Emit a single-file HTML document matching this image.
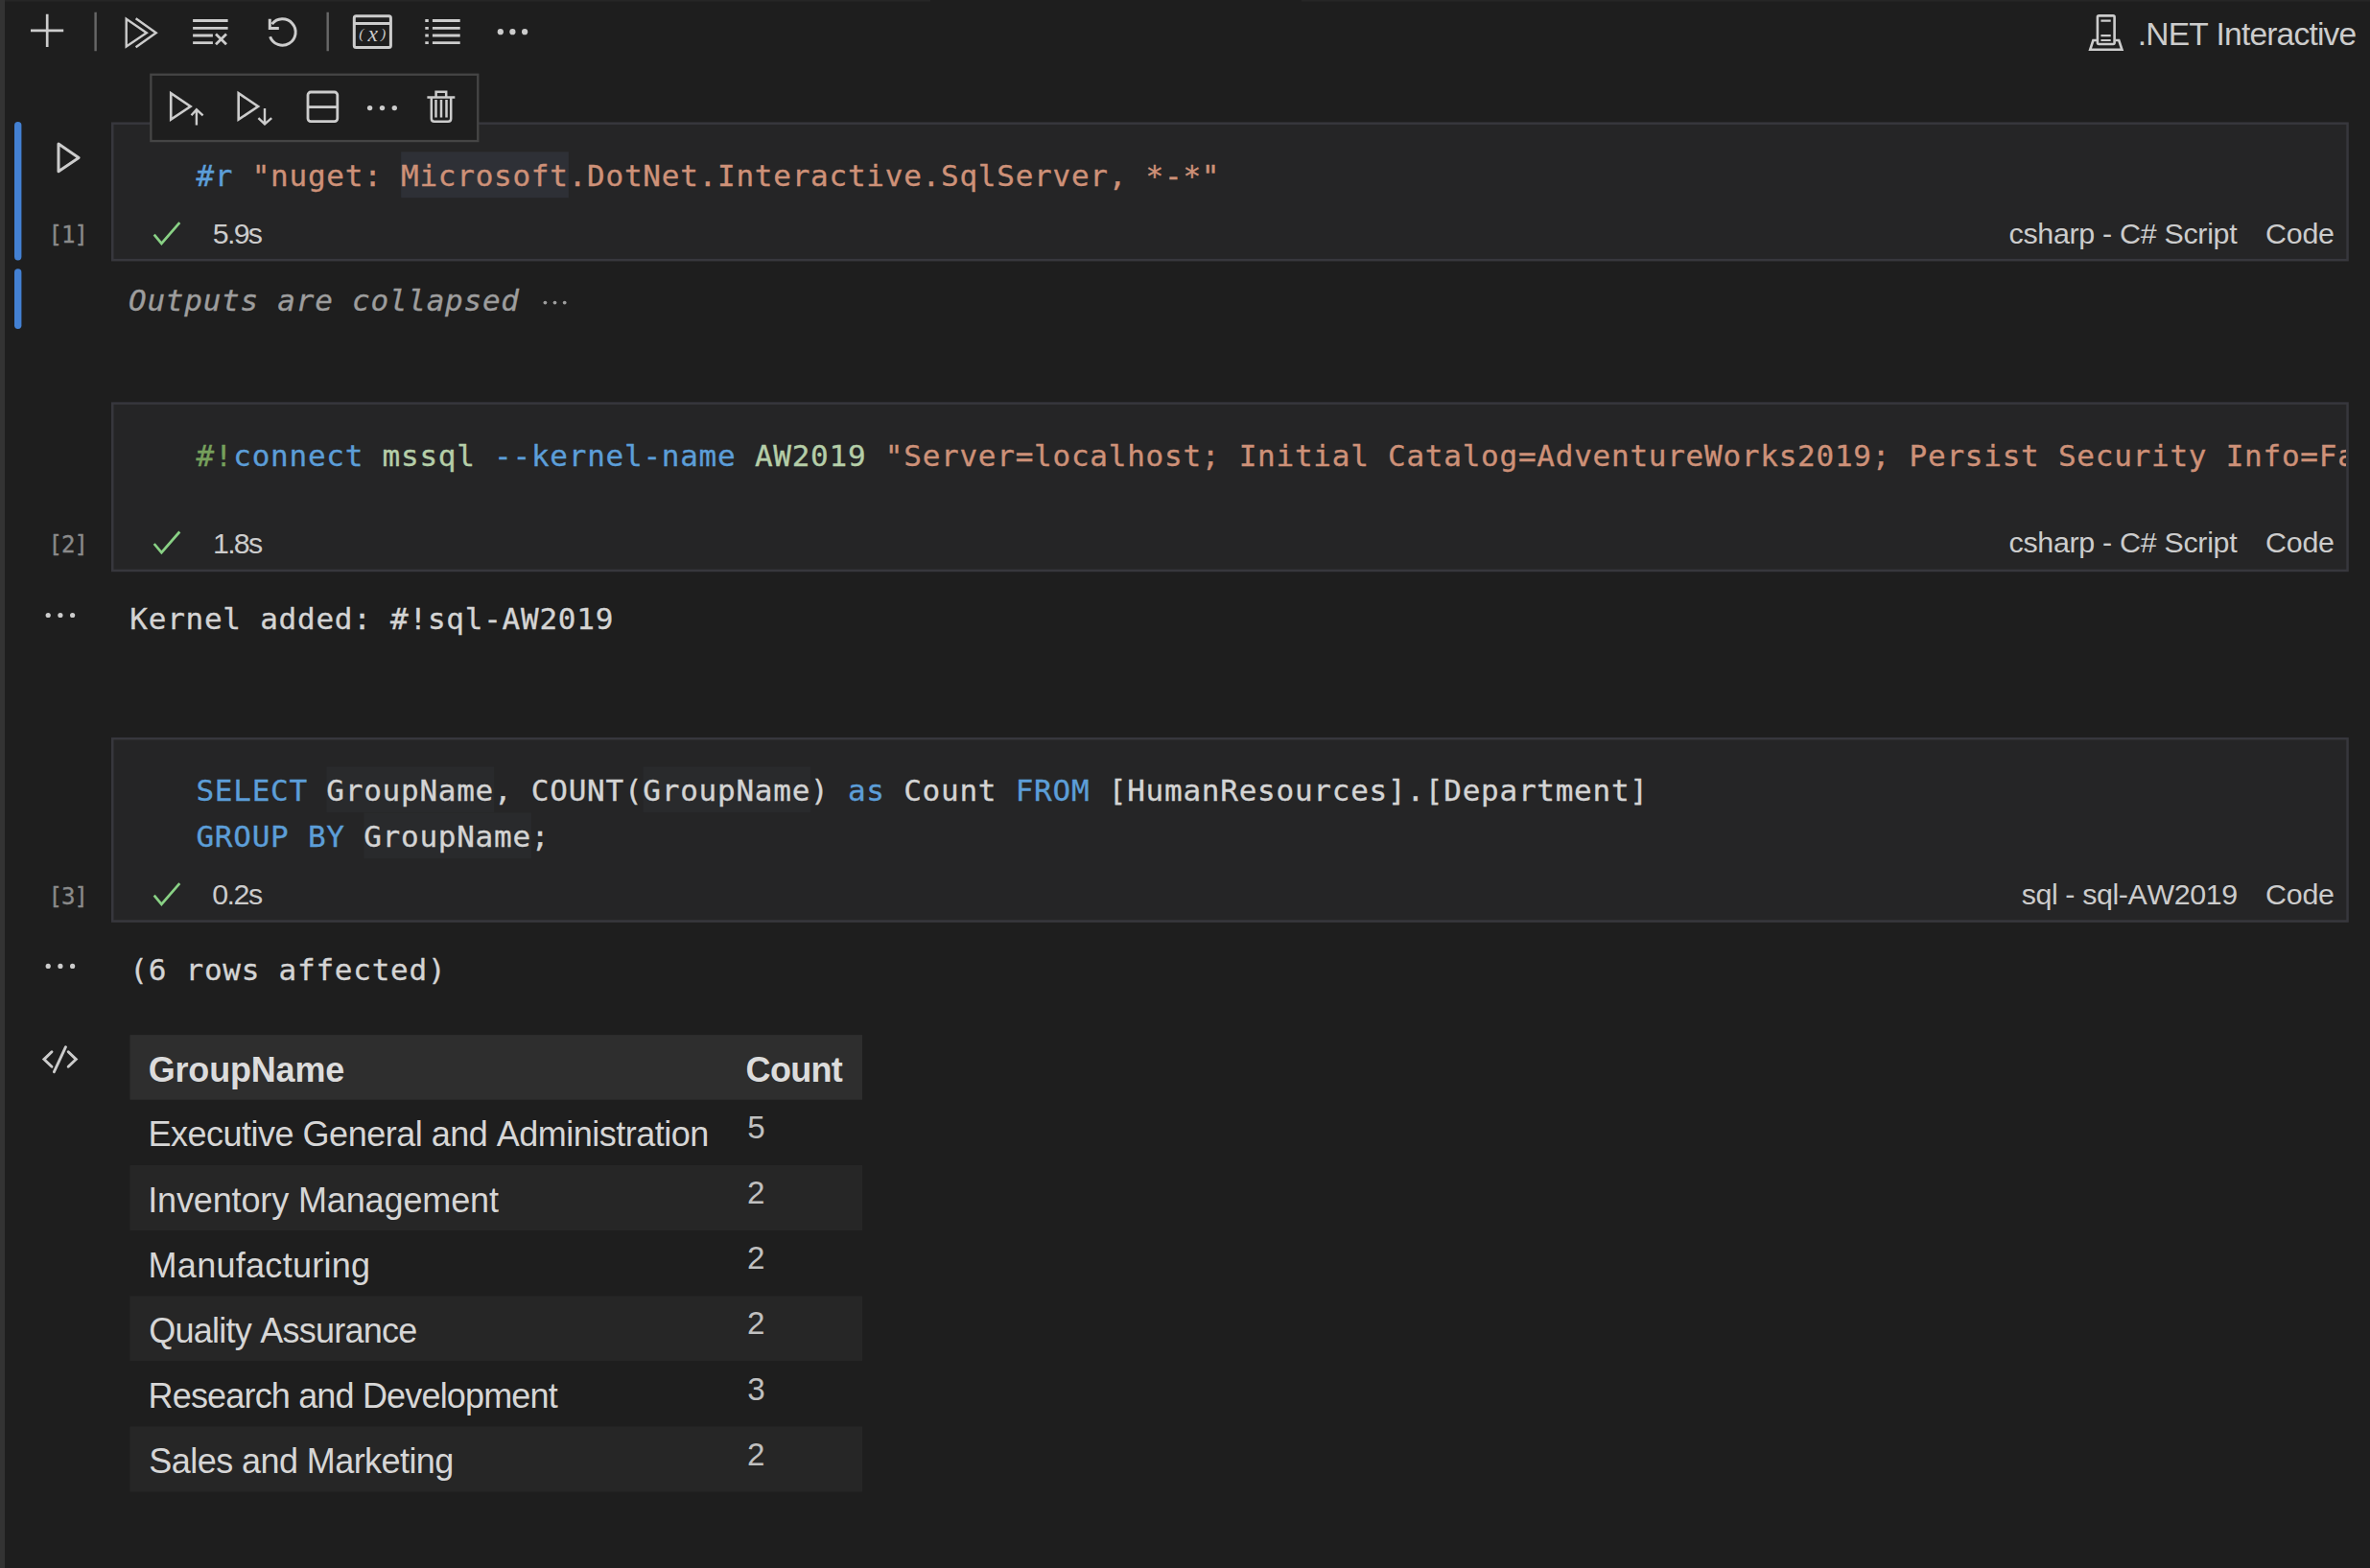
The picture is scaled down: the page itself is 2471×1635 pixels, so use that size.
<!DOCTYPE html>
<html lang="en"><head><meta charset="utf-8"><title>Notebook</title>
<style>
html,body{margin:0;padding:0;background:#1e1e1e;}
#app{position:relative;width:2471px;height:1635px;overflow:hidden;background:#1e1e1e;}
.t{position:absolute;white-space:pre;margin:0;font-kerning:none;}
.mono{font-family:"DejaVu Sans Mono", "Liberation Mono", monospace;-webkit-text-stroke:0.35px;}
.sans{font-family:"Liberation Sans", sans-serif;}
.serif{font-family:"Liberation Serif", serif;}
svg.ov{position:absolute;left:0;top:0;}
</style></head><body><div id="app">
<svg class="ov" width="2471" height="1635" viewBox="0 0 2471 1635">
<rect x="0.00" y="0.00" width="5.00" height="1635.00" fill="#333333"/>
<rect x="5.00" y="0.00" width="965.00" height="1.60" fill="#262626"/>
<rect x="1357.00" y="0.00" width="1114.00" height="1.60" fill="#262626"/>
<rect x="15.00" y="127.00" width="7.40" height="144.50" fill="#4380d2" rx="3.7"/>
<rect x="15.00" y="280.30" width="7.40" height="62.70" fill="#4380d2" rx="3.7"/>
<rect x="117.25" y="128.65" width="2330.30" height="142.50" fill="#252526" stroke="#37373d" stroke-width="2.5"/>
<rect x="418.16" y="158.30" width="174.74" height="47.93" fill="#2e3036"/>
<rect x="117.25" y="420.55" width="2330.30" height="174.40" fill="#252526" stroke="#37373d" stroke-width="2.5"/>
<rect x="117.25" y="770.15" width="2330.30" height="190.40" fill="#252526" stroke="#37373d" stroke-width="2.5"/>
<rect x="340.50" y="799.40" width="174.74" height="47.93" fill="#292a2c"/>
<rect x="670.56" y="799.40" width="174.74" height="47.93" fill="#292a2c"/>
<rect x="379.33" y="847.33" width="174.73" height="47.93" fill="#292a2c"/>
<rect x="135.50" y="1079.10" width="763.50" height="67.60" fill="#2e2e2e"/>
<rect x="135.50" y="1215.00" width="763.50" height="68.10" fill="#262626"/>
<rect x="135.50" y="1351.20" width="763.50" height="68.10" fill="#262626"/>
<rect x="135.50" y="1487.40" width="763.50" height="68.10" fill="#262626"/>
</svg>
<div class="t mono" style="left:204.40px;top:164.63px;font-size:31.000px;line-height:36.09px;color:#d4d4d4;letter-spacing:0.751px;"><span style="color:#5c9ed8">#r</span> <span style="color:#ce9178">"nuget: Microsoft.DotNet.Interactive.SqlServer, *-*"</span></div>
<div class="t sans " style="left:221.78px;top:227.08px;font-size:30.40px;line-height:33.96px;color:#cccccc;letter-spacing:-1.715px;">5.9s</div>
<div class="t sans " style="left:2094.51px;top:226.78px;font-size:30.40px;line-height:33.96px;color:#cccccc;letter-spacing:-0.298px;">csharp - C# Script</div>
<div class="t sans " style="left:2361.96px;top:226.78px;font-size:30.40px;line-height:33.96px;color:#cccccc;letter-spacing:-0.193px;">Code</div>
<div class="t mono " style="left:50.60px;top:232.42px;font-size:24.00px;line-height:27.94px;color:#8a8a8a;letter-spacing:-1.050px;">[1]</div>
<div class="t mono " style="left:134.00px;top:294.93px;font-size:31.00px;line-height:36.09px;color:#9d9d9d;letter-spacing:0.751px;font-style:italic;">Outputs are collapsed</div>
<div class="t mono" style="left:204.40px;top:456.93px;font-size:31.000px;line-height:36.09px;color:#d4d4d4;letter-spacing:0.751px;width:2242.00px;overflow:hidden;"><span style="color:#76a05c">#!</span><span style="color:#5c9ed8">connect</span> <span style="color:#b5cea8">mssql</span> <span style="color:#5c9ed8">--kernel-name</span> <span style="color:#b5cea8">AW2019</span> <span style="color:#ce9178">"Server=localhost; Initial Catalog=AdventureWorks2019; Persist Security Info=False; Integrated Security=True; Encrypt=false"</span></div>
<div class="t sans " style="left:222.08px;top:549.78px;font-size:30.40px;line-height:33.96px;color:#cccccc;letter-spacing:-1.815px;">1.8s</div>
<div class="t sans " style="left:2094.51px;top:549.48px;font-size:30.40px;line-height:33.96px;color:#cccccc;letter-spacing:-0.298px;">csharp - C# Script</div>
<div class="t sans " style="left:2361.96px;top:549.48px;font-size:30.40px;line-height:33.96px;color:#cccccc;letter-spacing:-0.193px;">Code</div>
<div class="t mono " style="left:50.60px;top:555.12px;font-size:24.00px;line-height:27.94px;color:#8a8a8a;letter-spacing:-1.050px;">[2]</div>
<div class="t mono " style="left:135.30px;top:626.53px;font-size:31.00px;line-height:36.09px;color:#d4d4d4;letter-spacing:0.751px;">Kernel added: #!sql-AW2019</div>
<div class="t mono" style="left:204.40px;top:805.73px;font-size:31.000px;line-height:36.09px;color:#d4d4d4;letter-spacing:0.751px;"><span style="color:#5c9ed8">SELECT</span> GroupName, COUNT(GroupName) <span style="color:#5c9ed8">as</span> Count <span style="color:#5c9ed8">FROM</span> [HumanResources].[Department]</div>
<div class="t mono" style="left:204.40px;top:853.66px;font-size:31.000px;line-height:36.09px;color:#d4d4d4;letter-spacing:0.751px;"><span style="color:#5c9ed8">GROUP BY</span> GroupName;</div>
<div class="t sans " style="left:221.21px;top:916.18px;font-size:30.40px;line-height:33.96px;color:#cccccc;letter-spacing:-1.525px;">0.2s</div>
<div class="t sans " style="left:2107.65px;top:915.88px;font-size:30.40px;line-height:33.96px;color:#cccccc;letter-spacing:-0.392px;">sql - sql-AW2019</div>
<div class="t sans " style="left:2361.96px;top:915.88px;font-size:30.40px;line-height:33.96px;color:#cccccc;letter-spacing:-0.193px;">Code</div>
<div class="t mono " style="left:50.60px;top:921.52px;font-size:24.00px;line-height:27.94px;color:#8a8a8a;letter-spacing:-1.050px;">[3]</div>
<div class="t mono " style="left:135.30px;top:993.03px;font-size:31.00px;line-height:36.09px;color:#d4d4d4;letter-spacing:0.751px;">(6 rows affected)</div>
<div class="t sans " style="left:2228.83px;top:16.58px;font-size:33.60px;line-height:37.54px;color:#cccccc;letter-spacing:-0.821px;">.NET Interactive</div>
<div class="t sans " style="left:154.72px;top:1095.51px;font-size:36.00px;line-height:40.22px;color:#dcdcdc;letter-spacing:-0.191px;font-weight:bold;">GroupName</div>
<div class="t sans " style="left:777.62px;top:1095.51px;font-size:36.00px;line-height:40.22px;color:#dcdcdc;letter-spacing:-0.710px;font-weight:bold;">Count</div>
<div class="t sans " style="left:154.55px;top:1163.41px;font-size:36.00px;line-height:40.22px;color:#d6d6d6;letter-spacing:-0.501px;">Executive General and Administration</div>
<div class="t sans " style="left:779.27px;top:1157.14px;font-size:33.20px;line-height:37.09px;color:#c0c0c0;">5</div>
<div class="t sans " style="left:154.18px;top:1231.51px;font-size:36.00px;line-height:40.22px;color:#d6d6d6;letter-spacing:-0.128px;">Inventory Management</div>
<div class="t sans " style="left:778.93px;top:1225.24px;font-size:33.20px;line-height:37.09px;color:#c0c0c0;">2</div>
<div class="t sans " style="left:154.55px;top:1299.61px;font-size:36.00px;line-height:40.22px;color:#d6d6d6;letter-spacing:0.287px;">Manufacturing</div>
<div class="t sans " style="left:778.93px;top:1293.34px;font-size:33.20px;line-height:37.09px;color:#c0c0c0;">2</div>
<div class="t sans " style="left:155.29px;top:1367.71px;font-size:36.00px;line-height:40.22px;color:#d6d6d6;letter-spacing:-0.752px;">Quality Assurance</div>
<div class="t sans " style="left:778.93px;top:1361.44px;font-size:33.20px;line-height:37.09px;color:#c0c0c0;">2</div>
<div class="t sans " style="left:154.55px;top:1435.81px;font-size:36.00px;line-height:40.22px;color:#d6d6d6;letter-spacing:-0.828px;">Research and Development</div>
<div class="t sans " style="left:779.34px;top:1429.54px;font-size:33.20px;line-height:37.09px;color:#c0c0c0;">3</div>
<div class="t sans " style="left:155.37px;top:1503.91px;font-size:36.00px;line-height:40.22px;color:#d6d6d6;letter-spacing:-0.568px;">Sales and Marketing</div>
<div class="t sans " style="left:778.93px;top:1497.64px;font-size:33.20px;line-height:37.09px;color:#c0c0c0;">2</div>
<svg class="ov" width="2471" height="1635" viewBox="0 0 2471 1635">
<polyline points="160.7,244.7 168.4,253.9 187.3,232.2" fill="none" stroke="#89d185" stroke-width="2.7"/>
<polyline points="160.7,567.0 168.4,576.2 187.3,554.5" fill="none" stroke="#89d185" stroke-width="2.7"/>
<polyline points="160.7,933.6 168.4,942.8 187.3,921.1" fill="none" stroke="#89d185" stroke-width="2.7"/>
<path d="M32 31.9H66.2M49.2 14.8V49" fill="none" stroke="#cccccc" stroke-width="2.7"/>
<path d="M99.6 12.7V53.2M341.7 12.7V53.2" fill="none" stroke="#686868" stroke-width="2.4"/>
<path d="M131.7 19.8V48.6L152.8 34.2Z" fill="none" stroke="#cccccc" stroke-width="2.4" stroke-linejoin="miter"/>
<path d="M141.6 19.2L162.7 34.2L141.6 49.2" fill="none" stroke="#cccccc" stroke-width="2.4" stroke-linejoin="miter"/>
<path d="M201.1 21.5H237.6M201.1 29.4H237.6M201.1 37H221.9M201.1 44.6H221.9" fill="none" stroke="#cccccc" stroke-width="2.8"/>
<path d="M225 35.6L236 46.2M236 35.6L225 46.2" fill="none" stroke="#cccccc" stroke-width="2.8"/>
<path d="M283.6 25.2A13.7 13.7 0 1 1 281.6 38.2" fill="none" stroke="#cccccc" stroke-width="3"/>
<path d="M281.3 19.7V29.6H290.8" fill="none" stroke="#cccccc" stroke-width="3"/>
<rect x="369.3" y="16.7" width="38.1" height="32.9" rx="2" fill="none" stroke="#cccccc" stroke-width="3"/>
<path d="M369.3 24.6H407.4" fill="none" stroke="#cccccc" stroke-width="3"/>
<text x="374.2" y="40.3" class="serif" font-style="italic" font-size="15.6" fill="#cccccc">(</text>
<text x="388.8" y="43.2" text-anchor="middle" class="serif" font-style="italic" font-size="23.5" fill="#cccccc">x</text>
<text x="402.2" y="40.3" text-anchor="end" class="serif" font-style="italic" font-size="15.6" fill="#cccccc">)</text>
<path d="M443.3 21.5H446.8M450.9 21.5H479.7" fill="none" stroke="#cccccc" stroke-width="2.8"/>
<path d="M443.3 29.4H446.8M450.9 29.4H479.7" fill="none" stroke="#cccccc" stroke-width="2.8"/>
<path d="M443.3 37H446.8M450.9 37H479.7" fill="none" stroke="#cccccc" stroke-width="2.8"/>
<path d="M443.3 44.6H446.8M450.9 44.6H479.7" fill="none" stroke="#cccccc" stroke-width="2.8"/>
<circle cx="521.8" cy="33.2" r="3.1" fill="#cccccc"/>
<circle cx="534.4" cy="33.2" r="3.1" fill="#cccccc"/>
<circle cx="547.1" cy="33.2" r="3.1" fill="#cccccc"/>
<rect x="157.35" y="77.75" width="340.90" height="69.30" fill="#1e1e1e" stroke="#454545" stroke-width="2.3"/>
<path d="M178.2 97.2V124.6L198.6 111Z" fill="none" stroke="#cccccc" stroke-width="2.6"/>
<path d="M204.9 130.5V114.5M199.5 120.3L204.9 114.3L211.6 120.3" fill="none" stroke="#cccccc" stroke-width="2.4"/>
<path d="M248.7 97.2V124.6L269.1 111Z" fill="none" stroke="#cccccc" stroke-width="2.6"/>
<path d="M276 112.9V129M269.4 123.2L276 129.4L283.2 123.2" fill="none" stroke="#cccccc" stroke-width="2.4"/>
<rect x="321" y="96" width="30.8" height="30.6" rx="3" fill="none" stroke="#cccccc" stroke-width="2.8"/>
<path d="M321 111.6H351.8" fill="none" stroke="#cccccc" stroke-width="2.8"/>
<circle cx="385.6" cy="112.6" r="2.7" fill="#cccccc"/>
<circle cx="398.5" cy="112.6" r="2.7" fill="#cccccc"/>
<circle cx="411.3" cy="112.6" r="2.7" fill="#cccccc"/>
<path d="M445.4 101.4H474.3M454.6 101V95.8H465.2V101M449.8 101.4V123.8Q449.8 126.8 452.8 126.8H467.2Q470.2 126.8 470.2 123.8V101.4M454.5 104V122.5M460 104V122.5M465.5 104V122.5" fill="none" stroke="#cccccc" stroke-width="2.5"/>
<path d="M61 150.1V178.7L82.1 164.4Z" fill="none" stroke="#cccccc" stroke-width="3" stroke-linejoin="round"/>
<circle cx="568.4" cy="315.6" r="1.9" fill="#9d9d9d"/>
<circle cx="578.5" cy="315.6" r="1.9" fill="#9d9d9d"/>
<circle cx="588.7" cy="315.6" r="1.9" fill="#9d9d9d"/>
<circle cx="50.2" cy="641.5" r="2.6" fill="#cccccc"/>
<circle cx="62.9" cy="641.5" r="2.6" fill="#cccccc"/>
<circle cx="75.6" cy="641.5" r="2.6" fill="#cccccc"/>
<circle cx="50.2" cy="1007.4" r="2.6" fill="#cccccc"/>
<circle cx="62.9" cy="1007.4" r="2.6" fill="#cccccc"/>
<circle cx="75.6" cy="1007.4" r="2.6" fill="#cccccc"/>
<path d="M54 1096.8L45.9 1104.6L54 1112.3M71.2 1096.8L79.3 1104.6L71.2 1112.3M68.5 1091.7L56.4 1117.7" fill="none" stroke="#cccccc" stroke-width="2.9" stroke-linecap="round"/>
<rect x="2186.9" y="16.4" width="17.7" height="29.6" rx="1.5" fill="none" stroke="#cccccc" stroke-width="2.6"/>
<path d="M2190.4 21.7H2200.7M2190.4 37.1H2200.7M2190.4 42H2200.7" fill="none" stroke="#cccccc" stroke-width="2.2"/>
<path d="M2186 42H2182.4L2179.2 51.8H2212.4L2209.2 42H2205.6" fill="none" stroke="#cccccc" stroke-width="2.6"/>
</svg>
</div></body></html>
